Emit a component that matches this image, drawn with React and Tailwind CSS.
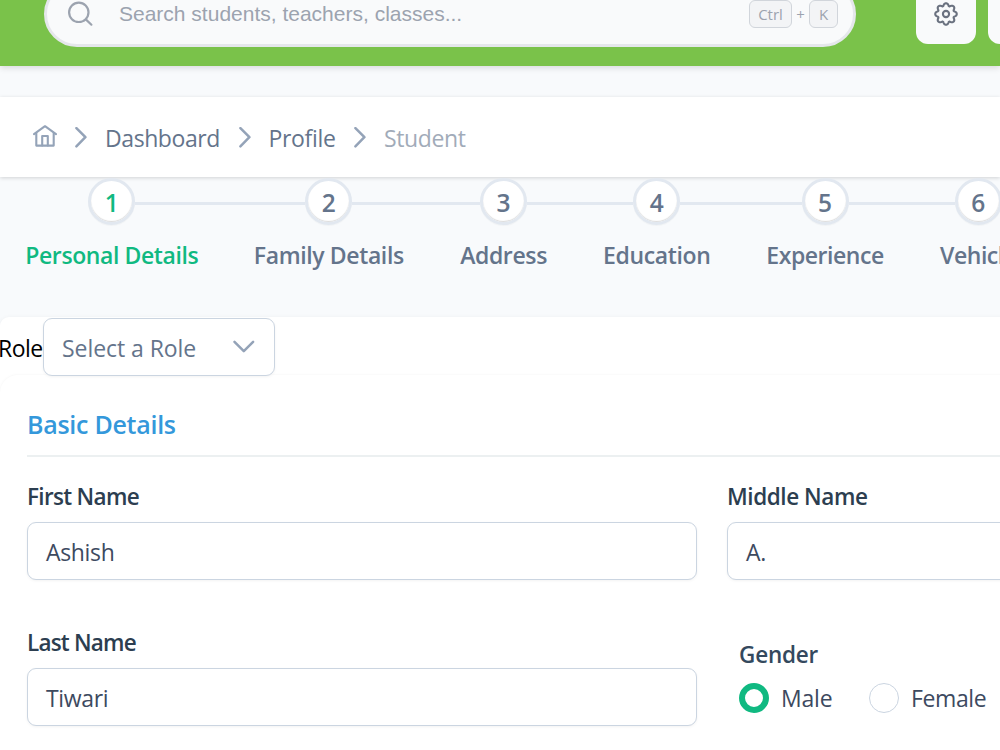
import React from "react";

const SearchIcon = () => (
  <svg width="26" height="26" viewBox="0 0 26 26" fill="none" stroke="#9ca3af" strokeWidth="2.2" strokeLinecap="round" className="shrink-0">
    <circle cx="10.8" cy="11.3" r="9.7" />
    <path d="M17.8 18.4L23.4 23.7" />
  </svg>
);

// Eight-lobed cog outline sampled in polar coordinates.
const cogPath =
  Array.from({ length: 96 }, (_, i) => {
    const a = (i / 96) * Math.PI * 2;
    const r = 9.7 + 1.25 * Math.cos(8 * a) - 0.2 * Math.cos(16 * a);
    return `${i ? "L" : "M"}${(13 + r * Math.sin(a)).toFixed(2)} ${(13 - r * Math.cos(a)).toFixed(2)}`;
  }).join("") + "Z";

const CogIcon = () => (
  <svg width="26" height="26" viewBox="0 0 26 26" fill="none" stroke="#6b7280" strokeWidth="2.1" strokeLinejoin="round" className="-mt-[1px]">
    <path d={cogPath} />
    <circle cx="13" cy="13" r="3.1" />
  </svg>
);

const HomeIcon = () => (
  <svg width="24" height="22" viewBox="0 0 24 22" fill="none" stroke="#94a3b8" strokeWidth="2.1" strokeLinecap="round" strokeLinejoin="round" className="-mt-[2px] shrink-0">
    <path d="M1 9.2L12 1.2L23 9.2" />
    <path d="M3.3 8.2V20.6H20.7V8.2" />
    <path d="M9.2 20.4V11H14.8V20.4" />
  </svg>
);

const Chevron = () => (
  <svg width="12" height="21" viewBox="0 0 12 21" fill="none" stroke="#94a3b8" strokeWidth="2.5" strokeLinecap="round" strokeLinejoin="round" className="shrink-0">
    <path d="M1.4 1.1L10.4 10.2L1.4 19.3" />
  </svg>
);

const ChevronDown = () => (
  <svg width="22" height="13" viewBox="0 0 22 13" fill="none" stroke="#94a3b8" strokeWidth="2.5" strokeLinecap="round" strokeLinejoin="round" className="shrink-0">
    <path d="M1.5 1.8L10.8 11.1L20.1 1.8" />
  </svg>
);

const steps = [
  { label: "Personal Details", width: "w-[228px]", tracking: "tracking-[-0.4px]", first: true },
  { label: "Family Details", width: "w-[206px]", tracking: "tracking-[-0.38px]" },
  { label: "Address", width: "w-[143.5px]", tracking: "tracking-[-0.37px]" },
  { label: "Education", width: "w-[163px]", tracking: "tracking-[-0.35px]" },
  { label: "Experience", width: "w-[173.5px]", tracking: "tracking-[-0.45px]" },
  { label: "Vehicle", width: "w-[133px]", tracking: "tracking-[-0.47px]" },
];

function Step({ step, number }) {
  return (
    <div className={`flex shrink-0 flex-col items-center ${step.width}`}>
      <div className="flex w-full items-center">
        <div className={`mt-[3px] h-[3px] flex-1 ${step.first ? "" : "bg-[#e2e8f0]"}`} />
        <div className={`flex size-[47px] items-center justify-center rounded-full border-[3px] border-[#e2e8f0] bg-white pt-[4px] text-[24.5px] font-semibold shadow-[0_1px_1px_rgba(0,0,0,0.03),inset_0_-1px_1px_rgba(0,0,0,0.14)] ${step.first ? "text-[#10b981]" : "text-[#64748b]"}`}>
          {number}
        </div>
        <div className="mt-[3px] h-[3px] flex-1 bg-[#e2e8f0]" />
      </div>
      <div className={`mt-[12px] text-[23px] leading-[36px] font-semibold whitespace-nowrap ${step.tracking} ${step.first ? "text-[#10b981]" : "text-[#64748b]"}`}>
        {step.label}
      </div>
    </div>
  );
}

function Field({ label, value, tracking }) {
  return (
    <div className="w-[670px] shrink-0">
      <div className={`text-[22.5px] leading-[34px] font-semibold text-[#2c3e50] ${tracking}`}>{label}</div>
      <div className="mt-[8px] flex h-[58px] items-center rounded-[9px] border border-[#cbd5e1] bg-white px-[18px] pt-[3px] text-[23px] tracking-[-0.35px] text-[#3d4a5f] shadow-[0_1px_3px_rgba(18,18,23,0.05)]">
        {value}
      </div>
    </div>
  );
}

export default function App() {
  return (
    <div className="h-[750px] w-[1000px] overflow-hidden bg-[#f8fafc] font-['Open_Sans',sans-serif]">
      <header className="flex h-[66px] items-end bg-[#7ac24a] pl-[44px] shadow-[0_2px_6px_rgba(0,0,0,0.13)]">
        <div className="mb-[19px] flex h-[66px] w-[812px] shrink-0 items-center rounded-full border-[3px] border-[#e5e7eb] bg-[#f9fafb] pr-[15px] pl-[21px]">
          <SearchIcon />
          <span className="ml-[25px] flex-1 font-['Liberation_Sans',sans-serif] text-[21px] text-[#9ca3af]">Search students, teachers, classes...</span>
          <div className="flex items-center text-[15px] text-[#9ca3af]">
            <kbd className="flex h-[28px] w-[43px] items-center justify-center rounded-[6px] border border-[#d1d5db] bg-[#f3f4f6] font-['Open_Sans',sans-serif]">Ctrl</kbd>
            <span className="w-[17px] text-center">+</span>
            <kbd className="flex h-[28px] w-[29px] items-center justify-center rounded-[6px] border border-[#d1d5db] bg-[#f3f4f6] font-['Open_Sans',sans-serif]">K</kbd>
          </div>
        </div>
        <div className="mb-[22px] ml-[60px] flex size-[60px] shrink-0 items-center justify-center rounded-[12px] bg-[#f9fafb]">
          <CogIcon />
        </div>
        <div className="mb-[22px] ml-[12px] size-[60px] shrink-0 rounded-[12px] bg-[#f9fafb]" />
      </header>

      <nav className="mt-[31px] flex h-[80px] items-center bg-white pl-[33px] text-[23px] text-[#64748b] shadow-[0_1px_4px_rgba(0,0,0,0.16)]">
        <HomeIcon />
        <div className="w-[18px]" />
        <Chevron />
        <span className="ml-[18px] w-[115px] pt-[3px] tracking-[-0.42px]">Dashboard</span>
        <div className="w-[19px]" />
        <Chevron />
        <span className="ml-[17.5px] w-[67.5px] pt-[3px] tracking-[-0.33px]">Profile</span>
        <div className="w-[18px]" />
        <Chevron />
        <span className="ml-[18px] pt-[3px] tracking-[-0.38px] opacity-60">Student</span>
      </nav>

      <div className="-ml-[2.2px] flex h-[140px] pt-[1px]">
        {steps.map((step, i) => (
          <Step key={step.label} step={step} number={i + 1} />
        ))}
      </div>

      <main className="h-[480px] w-[1420px] rounded-[9px] bg-white shadow-[0_1px_5px_rgba(0,0,0,0.06)]">
        <div className="-ml-[2px] flex h-[58px] items-center text-[23px]">
          <span className="w-[45px] pt-[4px] tracking-[-0.5px] text-black">Role</span>
          <div className="mt-[1px] flex h-[58px] w-[232px] shrink-0 items-center justify-between rounded-[9px] border border-[#cbd5e1] bg-white pr-[19px] pl-[18px] text-[#64748b] shadow-[0_1px_3px_rgba(18,18,23,0.05)]">
            <span className="pt-[4px] tracking-[-0.06px]">Select a Role</span>
            <ChevronDown />
          </div>
        </div>
        <section className="h-[422px] rounded-[18px] bg-white px-[27px] pt-[30px] shadow-[0_0_3px_rgba(0,0,0,0.05)]">
          <h2 className="h-[52px] border-b-2 border-[#ecf0f1] text-[25px] leading-[38px] font-semibold tracking-[-0.27px] text-[#3498db]">Basic Details</h2>
          <div className="mt-[23px] flex gap-[30px]">
            <Field label="First Name" value="Ashish" tracking="tracking-[-0.68px]" />
            <Field label="Middle Name" value="A." tracking="tracking-[-0.43px]" />
          </div>
          <div className="mt-[46px] flex gap-[30px]">
            <Field label="Last Name" value="Tiwari" tracking="tracking-[-0.8px]" />
            <div className="pt-[12px] pl-[12px]">
              <div className="text-[22.5px] leading-[34px] font-semibold tracking-[-0.2px] text-[#34495e]">Gender</div>
              <div className="mt-[11px] flex h-[31px] items-start text-[23px] leading-[30px] tracking-[-0.4px] text-[#3d4a5f]">
                <span className="size-[30px] rounded-full border-[6px] border-[#10b981] bg-white" />
                <span className="ml-[12px] w-[88px] tracking-[-0.2px]">Male</span>
                <span className="size-[30px] rounded-full border border-[#cbd5e1] bg-white" />
                <span className="ml-[12px]">Female</span>
              </div>
            </div>
          </div>
        </section>
      </main>
    </div>
  );
}
